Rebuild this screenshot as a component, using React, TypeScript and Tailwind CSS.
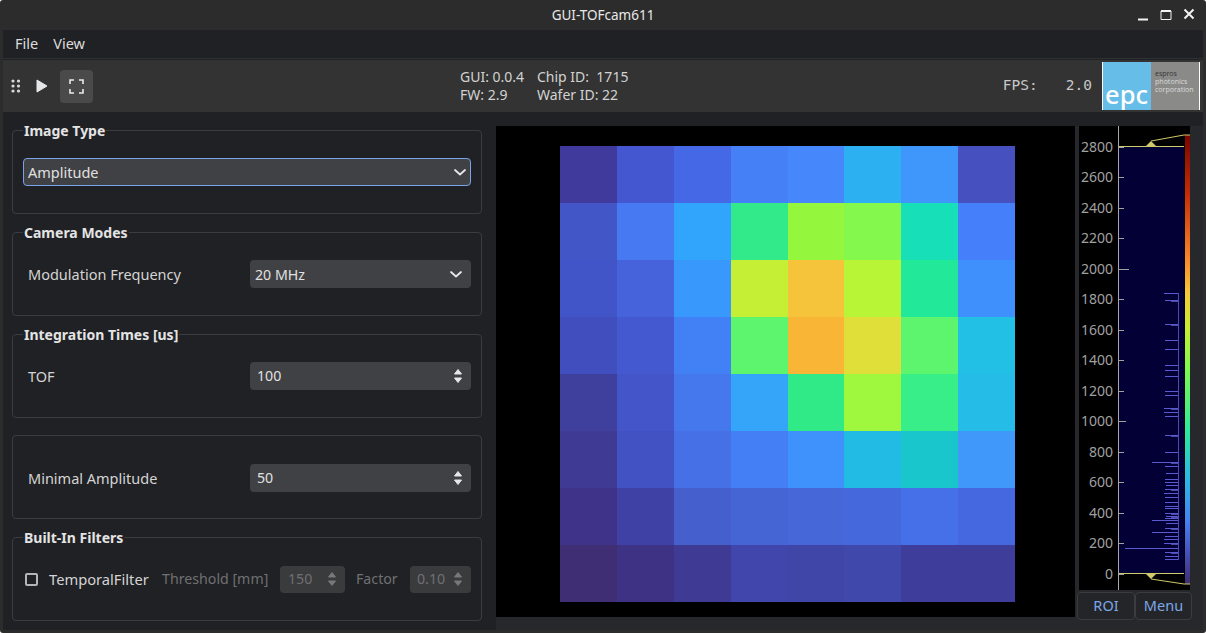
import type { ReactNode } from 'react';

const heat = [
    ['#3f3a9c', '#4557d0', '#4468e6', '#4680f6', '#4688fb', '#2db0f2', '#3f97fb', '#4650bf'],
    ['#4256c8', '#4679f2', '#31a5fb', '#33ea8a', '#94f73e', '#85f84e', '#17e0b8', '#457ffa'],
    ['#4255c8', '#4663dc', '#3898fc', '#c5ef34', '#f5c43a', '#b8f537', '#22e99a', '#3f90fd'],
    ['#414ebd', '#4459d0', '#4280f5', '#5ef56e', '#f9b636', '#e0de38', '#5cf56d', '#22c0e5'],
    ['#3f3f9e', '#4355c8', '#4478ec', '#34a5f8', '#30ea88', '#9ff83e', '#38ee88', '#25bce8'],
    ['#3f3a94', '#4352c2', '#4670e6', '#447ff6', '#3f92fb', '#22bbe4', '#18c6cc', '#3f98fa'],
    ['#3e3388', '#3f42a4', '#4560cc', '#4565d4', '#4567d8', '#4568dc', '#4570e8', '#4568e0'],
    ['#3f2e74', '#3e3284', '#3f3a94', '#4146ac', '#4045a8', '#4148ac', '#3f3d9c', '#3f3d9a'],
];

// [y, x where the spike starts]
const spikes = [
    [293, 1164], [300, 1165], [324, 1165], [340, 1165], [349, 1165], [365, 1165], [370, 1165], [376, 1165],
    [391, 1165], [395, 1165], [408, 1164], [412, 1164], [416, 1165], [435, 1165], [452, 1165], [462, 1152],
    [466, 1165], [473, 1166], [479, 1165], [482, 1165], [485, 1166], [489, 1165], [493, 1164], [497, 1165],
    [502, 1165], [506, 1165], [508, 1165], [513, 1165], [516, 1166], [518, 1165], [520, 1152], [523, 1166],
    [528, 1165], [532, 1152], [536, 1165], [539, 1164], [543, 1164], [548, 1125], [552, 1165], [556, 1165],
    [559, 1165],
];

const ticks = [2800, 2600, 2400, 2200, 2000, 1800, 1600, 1400, 1200, 1000, 800, 600, 400, 200, 0];

function Chevron() {
    return (
        <svg width="14" height="9" viewBox="0 0 14 9" className="ml-auto">
            <path d="M2 2l5 4.5L12 2" fill="none" stroke="#e6e6e6" strokeWidth="1.8" strokeLinecap="round" strokeLinejoin="round" />
        </svg>
    );
}

function SpinArrows({ color = '#e6e6e6' }: { color?: string }) {
    return (
        <svg width="10" height="18" viewBox="0 0 10 18" className="ml-auto shrink-0">
            <path d="M5 2.5L8.5 7h-7z" fill={color} stroke={color} strokeLinejoin="round" />
            <path d="M5 15.5L8.5 11h-7z" fill={color} stroke={color} strokeLinejoin="round" />
        </svg>
    );
}

function Group({ title, children }: { title: string; children: ReactNode }) {
    return (
        <fieldset className="h-[94px] rounded-[4px] border border-[#3b3c3f] px-[10px]">
            <legend className="h-5 px-[1px] text-[14px] leading-[22px] font-bold text-[#e4e4e4]">{title}</legend>
            {children}
        </fieldset>
    );
}

function LabeledRow({ label, children }: { label: string; children: ReactNode }) {
    return (
        <div className="flex h-[28px] items-center">
            <span className="ml-[5px] w-[222px] pt-[1px] text-[14.5px] text-[#d4d4d4]">{label}</span>
            {children}
        </div>
    );
}

function Field({ children }: { children: ReactNode }) {
    return <div className="flex h-[28px] w-[221px] items-center rounded-[4px] bg-[#404144] px-[5px] pr-[8px] text-[14.2px] text-[#e0e0e0]">{children}</div>;
}

function Logo() {
    return (
        <div className="flex h-[48px] w-[98px] overflow-hidden border-x border-white">
            <div className="flex w-[48px] items-end justify-center bg-[#66bde8] pr-[1px]">
                <span className="text-[25.5px] leading-[31px] font-medium text-white">epc</span>
            </div>
            <div className="flex flex-1 flex-col justify-center bg-[#8a8a88] pb-[8px] pl-[4px] text-[7px] leading-[8px] text-[#3a3a3a]">
                <span>espros</span>
                <span className="text-[#d8d8d8]">photonics</span>
                <span className="text-[#d8d8d8]">corporation</span>
            </div>
        </div>
    );
}

function Histogram() {
    const yOf = (v: number) => 573.5 - (v / 2800) * 427;
    return (
        <svg width="111" height="464" viewBox="1079 126 111 464" className="ml-[2px] block bg-black">
            <defs>
                <linearGradient id="turbo" x1="0" y1="0" x2="0" y2="1">
                    <stop offset="0" stopColor="#7a0400" />
                    <stop offset="0.13" stopColor="#c62a0a" />
                    <stop offset="0.27" stopColor="#f9812a" />
                    <stop offset="0.35" stopColor="#f5c73a" />
                    <stop offset="0.43" stopColor="#c8ec34" />
                    <stop offset="0.52" stopColor="#7cf94f" />
                    <stop offset="0.66" stopColor="#2ce8a0" />
                    <stop offset="0.77" stopColor="#2ab5ea" />
                    <stop offset="0.86" stopColor="#4680f6" />
                    <stop offset="0.93" stopColor="#4650c0" />
                    <stop offset="1" stopColor="#3f2e70" />
                </linearGradient>
            </defs>
            <rect x="1119" y="146.5" width="65" height="427" fill="#020035" />
            <rect x="1185" y="135" width="5" height="449" fill="url(#turbo)" />
            {spikes.map(([y, x]) => (
                <g key={y}>
                    <line x1={x} x2="1178" y1={y + 0.5} y2={y + 0.5} stroke="#5a5ad0" />
                    {y % 3 === 0 && <line x1="1171" x2="1178" y1={y + 1.5} y2={y + 1.5} stroke="#4a4aa8" />}
                </g>
            ))}
            <line x1="1178.5" x2="1178.5" y1="293" y2="560" stroke="#4c4cae" />
            <line x1="1118.5" x2="1118.5" y1="126" y2="590" stroke="#a8a8a8" />
            {ticks.map((t) => (
                <g key={t}>
                    <line
                        x1="1119"
                        x2={t === 2000 ? 1129 : t === 1000 ? 1126 : 1124}
                        y1={Math.round(yOf(t)) + 0.5}
                        y2={Math.round(yOf(t)) + 0.5}
                        stroke="#a0a0a0"
                    />
                    <text x="1113" y={yOf(t) + 5} textAnchor="end" fill="#a0a0a0" fontSize="14" fontFamily="'Noto Sans', sans-serif">
                        {t}
                    </text>
                </g>
            ))}
            <path d="M1119 146.5H1184M1151 141L1184 135H1190M1119 573.5H1184M1151 579L1184 584H1190" fill="none" stroke="#cfc96a" />
            <path d="M1146 146L1151 141L1156 146z" fill="#cfc96a" />
            <path d="M1146 574L1151 579L1156 574z" fill="#cfc96a" />
        </svg>
    );
}

export default function App() {
    return (
        <div className="h-screen w-full bg-white font-['Noto_Sans',sans-serif]">
            <div className="flex h-full flex-col overflow-hidden rounded-[3px] bg-[#2c2c2c] pr-[3px] pb-[3px] pl-[3px]">
                {/* Title bar */}
                <div className="relative flex h-[30px] shrink-0 items-center justify-center text-[13.5px] text-[#e8e8e8]">
                    GUI-TOFcam611
                    <div className="absolute top-[7px] right-[8px] flex items-center gap-[11px]">
                        <svg width="12" height="14" viewBox="0 0 12 14">
                            <path d="M1 12.5H11" stroke="#f2f2f2" strokeWidth="2" />
                        </svg>
                        <svg width="12" height="14" viewBox="0 0 12 14">
                            <path d="M1 4H11V12.5H1z" fill="none" stroke="#f2f2f2" strokeWidth="1" />
                            <path d="M1 4H11" stroke="#f2f2f2" strokeWidth="2" />
                        </svg>
                        <svg width="12" height="14" viewBox="0 0 12 14">
                            <path d="M1.5 2.5L10.5 11.5M10.5 2.5L1.5 11.5" stroke="#f2f2f2" strokeWidth="2" />
                        </svg>
                    </div>
                </div>

                <div className="flex min-h-0 flex-1 flex-col bg-[#202124]">
                    {/* Menu */}
                    <div className="flex h-[29px] shrink-0 items-center gap-[15px] border-b border-[#2f3033] pl-[12px] text-[14.5px] text-[#dcdcdc]">
                        <span>File</span>
                        <span>View</span>
                    </div>

                    {/* Toolbar */}
                    <div className="mt-[1px] flex h-[52px] shrink-0 items-center bg-[#333333] pl-[8px] pr-[3px]">
                        <svg width="10" height="14" viewBox="0 0 10 14">
                            {[2, 7, 12].map((y) => (
                                <g key={y} fill="#d8dadc">
                                    <circle cx="2" cy={y} r="1.6" />
                                    <circle cx="7.5" cy={y} r="1.6" />
                                </g>
                            ))}
                        </svg>
                        <svg width="12" height="14" viewBox="0 0 12 14" className="ml-[15px]">
                            <path d="M1 1L11 7L1 13z" fill="#e4e6e8" stroke="#e4e6e8" strokeLinejoin="round" />
                        </svg>
                        <div className="ml-[12px] flex h-[33px] w-[33px] items-center justify-center rounded-[4px] bg-[#4a4a4a]">
                            <svg width="15" height="15" viewBox="0 0 15 15">
                                <path d="M1 5V1H5M10 1H14V5M14 10V14H10M5 14H1V10" fill="none" stroke="#e8eaec" strokeWidth="1.6" />
                            </svg>
                        </div>
                        <div className="ml-[367px] grid grid-cols-[77px_auto] text-[14px] leading-[18px] whitespace-pre text-[#d2d2d2]">
                            <span>GUI: 0.0.4</span>
                            <span>Chip ID:  1715</span>
                            <span>FW: 2.9</span>
                            <span>Wafer ID: 22</span>
                        </div>
                        <div className="ml-auto flex font-['DejaVu_Sans_Mono',monospace] text-[14.5px] text-[#c8c8c8]">
                            <span className="w-[63px]">FPS:</span>
                            <span>2.0</span>
                        </div>
                        <div className="ml-[10px]">
                            <Logo />
                        </div>
                    </div>

                    {/* Main */}
                    <div className="flex min-h-0 flex-1">
                        <div className="mt-[8px] ml-[9px] flex w-[470px] shrink-0 flex-col gap-[8px]">
                            <Group title="Image Type">
                                <div className="mt-[18px] flex h-[28px] items-center rounded-[4px] border border-[#7aa2e6] bg-[#404144] pl-[4px] pr-[3px] text-[14.5px] text-[#e0e0e0]">
                                    <span className="pt-[1px]">Amplitude</span>
                                    <Chevron />
                                </div>
                            </Group>
                            <Group title="Camera Modes">
                                <div className="mt-[18px]">
                                    <LabeledRow label="Modulation Frequency">
                                        <Field>
                                            <span className="pt-[1px]">20 MHz</span>
                                            <Chevron />
                                        </Field>
                                    </LabeledRow>
                                </div>
                            </Group>
                            <Group title="Integration Times [us]">
                                <div className="mt-[18px]">
                                    <LabeledRow label="TOF">
                                        <Field>
                                            <span className="ml-[2px]">100</span>
                                            <SpinArrows />
                                        </Field>
                                    </LabeledRow>
                                </div>
                            </Group>
                            <fieldset className="mt-[9px] h-[84px] rounded-[4px] border border-[#3b3c3f] px-[10px]">
                                <div className="mt-[28px]">
                                    <LabeledRow label="Minimal Amplitude">
                                        <Field>
                                            <span className="ml-[2px]">50</span>
                                            <SpinArrows />
                                        </Field>
                                    </LabeledRow>
                                </div>
                            </fieldset>
                            <Group title="Built-In Filters">
                                <div className="mt-[18px] flex h-[28px] items-center text-[14.2px] text-[#6f7072]">
                                    <span className="ml-[2px] h-[13px] w-[13px] rounded-[2px] border-2 border-[#b4b4b4]" />
                                    <span className="ml-[11px] w-[113px] text-[14.7px] text-[#d4d4d4]">TemporalFilter</span>
                                    <span className="w-[118px]">Threshold [mm]</span>
                                    <div className="flex h-[27px] w-[65px] items-center rounded-[4px] bg-[#3a3b3d] pr-[8px] pl-[8px]">
                                        150
                                        <SpinArrows color="#77787a" />
                                    </div>
                                    <span className="ml-[11px] w-[54px]">Factor</span>
                                    <div className="flex h-[27px] w-[61px] items-center rounded-[4px] bg-[#3a3b3d] pr-[8px] pl-[7px]">
                                        0.10
                                        <SpinArrows color="#77787a" />
                                    </div>
                                </div>
                            </Group>
                        </div>

                        {/* Right side: image view and histogram */}
                        <div className="mt-[14px] ml-[14px] flex flex-1 bg-[#27282b]">
                            <div className="flex h-[491px] w-[579px] shrink-0 items-center justify-center bg-black pt-[5px] pl-[4px]">
                                <div className="grid grid-cols-[repeat(8,56.875px)] grid-rows-[repeat(8,57px)]">
                                    {heat.flat().map((c, i) => (
                                        <div key={i} style={{ backgroundColor: c }} />
                                    ))}
                                </div>
                            </div>
                            <div className="ml-[2px] flex w-[115px] shrink-0 flex-col">
                                <Histogram />
                                <div className="mt-[2px] flex h-[28px]">
                                    <button className="w-[58px] rounded-[4px] border border-[#3b3c3f] bg-[#242528] text-[14.5px] text-[#7ba7e6]">ROI</button>
                                    <button className="w-[57px] rounded-[4px] border border-[#3b3c3f] bg-[#242528] text-[14.5px] text-[#7ba7e6]">Menu</button>
                                </div>
                            </div>
                        </div>
                    </div>
                </div>
            </div>
        </div>
    );
}
